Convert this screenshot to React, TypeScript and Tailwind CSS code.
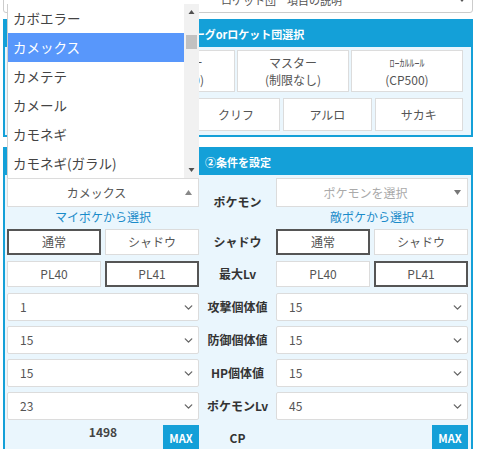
import React from 'react';
import { ChevronDown } from 'lucide-react';

const pokemonList = ['カボエラー', 'カメックス', 'カメテテ', 'カメール', 'カモネギ', 'カモネギ(ガラル)'];

function PanelHeader({ title }: { title: string }) {
  return (
    <div className="flex h-[26px] items-center justify-center bg-[#14a0d8] text-[11px] font-bold text-white">
      {title}
    </div>
  );
}

function Toggle({ label, active }: { label: string; active?: boolean }) {
  return (
    <div
      className={
        active
          ? 'flex h-full items-center justify-center border-2 border-[#555] bg-white text-[12px] text-[#555]'
          : 'flex h-full items-center justify-center border border-[#dcdcdc] bg-white text-[12px] text-[#555]'
      }
    >
      {label}
    </div>
  );
}

function ValueSelect({ value }: { value: string }) {
  return (
    <div className="flex h-full items-center justify-between rounded-[2px] border border-[#dcdcdc] bg-white pl-[12px] pr-[3px] text-[12px] text-[#555]">
      <span>{value}</span>
      <ChevronDown size={13} strokeWidth={2.5} className="text-[#666]" />
    </div>
  );
}

function Row({ label, h, mt, children }: { label: string; h: string; mt: string; children: React.ReactNode }) {
  return (
    <div className={`grid grid-cols-[192px_75px_192px] gap-x-[1px] ${h} ${mt}`}>
      {React.Children.toArray(children)[0]}
      <div className="flex items-center justify-center text-[12px] font-bold text-[#333]">{label}</div>
      {React.Children.toArray(children)[1]}
    </div>
  );
}

function Dropdown() {
  return (
    <div className="absolute left-[7px] top-[4px] flex h-[174px] w-[192px] border-l border-[#cfcfcf] bg-white">
      <div className="flex-1">
        {pokemonList.map((name, i) => (
          <div
            key={name}
            className={
              i === 1
                ? 'flex h-[29px] items-center bg-[#5897fb] pl-[5px] text-[13.5px] text-white'
                : 'flex h-[29px] items-center pl-[5px] text-[13.5px] text-[#444]'
            }
          >
            {name}
          </div>
        ))}
      </div>
      <div className="flex w-[15px] flex-col items-center bg-[#f1f1f1]">
        <svg width="7" height="17" viewBox="0 0 7 17">
          <polygon points="0.5,10 6.5,10 3.5,6" fill="#505050" />
        </svg>
        <div className="mt-[14px] h-[14px] w-[11px] bg-[#c1c1c1]" />
        <div className="flex-1" />
        <svg width="7" height="17" viewBox="0 0 7 17">
          <polygon points="0.5,7 6.5,7 3.5,11" fill="#505050" />
        </svg>
      </div>
    </div>
  );
}

export default function App() {
  return (
    <div className="relative h-[449px] w-[480px] overflow-hidden bg-white pl-[3px] pr-[7px] font-['Noto_Sans_CJK_JP',sans-serif]">
      {/* top select, scrolled half out of view */}
      <div className="-mt-[13px] flex h-[26px] items-center justify-between rounded-[3px] border border-[#ccc] bg-white pl-[217px] pr-[6px] text-[11px] text-[#555]">
        <span>ロケット団　項目の説明</span>
        <svg width="8" height="6" viewBox="0 0 8 6">
          <polygon points="0,0 8,0 4,5" fill="#555" />
        </svg>
      </div>

      {/* panel 1 */}
      <div className="mt-[6px] border-2 border-[#14a0d8]">
        <PanelHeader title="①リーグorロケット団選択" />
        <div className="bg-[#eaf6fd] pb-[4px] pl-[4px] pr-[8px] pt-[3px]">
          <div className="grid h-[42px] grid-cols-4 gap-x-[2px] text-[12px] leading-[17px] text-[#555]">
            <div className="flex flex-col items-center justify-center border border-[#dcdcdc] bg-white">
              <span>スーパー</span>
              <span>(CP1500)</span>
            </div>
            <div className="flex flex-col items-center justify-center border border-[#dcdcdc] bg-white">
              <span>ハイパー</span>
              <span>(CP2500)</span>
            </div>
            <div className="flex flex-col items-center justify-center border border-[#dcdcdc] bg-white">
              <span>マスター</span>
              <span>(制限なし)</span>
            </div>
            <div className="flex flex-col items-center justify-center border border-[#dcdcdc] bg-white">
              <span className="text-[10px]">ﾛｰｶﾙﾙｰﾙ</span>
              <span>(CP500)</span>
            </div>
          </div>
          <div className="mt-[6px] grid h-[33px] grid-cols-5 gap-x-[3px]">
            <Toggle label="したっぱ" />
            <Toggle label="シエラ" />
            <Toggle label="クリフ" />
            <Toggle label="アルロ" />
            <Toggle label="サカキ" />
          </div>
        </div>
      </div>

      {/* panel 2 */}
      <div className="mt-[10px] border-x-2 border-t-2 border-[#14a0d8]">
        <PanelHeader title="②条件を設定" />
        <div className="h-[300px] bg-[#eaf6fd] pl-[2px] pr-[3px] pt-[3px]">
          <Row label="ポケモン" h="h-[48px]" mt="mt-0">
            <div className="flex flex-col items-center">
              <div className="flex h-[29px] w-full items-center justify-center border border-[#dcdcdc] bg-white text-[12px] text-[#555]">
                <span className="flex-1 text-center">カメックス</span>
                <svg width="7" height="5" viewBox="0 0 7 5" className="mr-[6px]">
                  <polygon points="0,5 7,5 3.5,0" fill="#888" />
                </svg>
              </div>
              <span className="mt-[1px] text-[12px] text-[#1a8bc9]">マイポケから選択</span>
            </div>
            <div className="flex flex-col items-center">
              <div className="flex h-[29px] w-full items-center justify-center border border-[#dcdcdc] bg-white text-[12px] text-[#aaa]">
                <span className="flex-1 text-center">ポケモンを選択</span>
                <svg width="7" height="5" viewBox="0 0 7 5" className="mr-[6px]">
                  <polygon points="0,0 7,0 3.5,5" fill="#777" />
                </svg>
              </div>
              <span className="mt-[1px] text-[12px] text-[#1a8bc9]">敵ポケから選択</span>
            </div>
          </Row>

          <Row label="シャドウ" h="h-[26px]" mt="mt-[3px]">
            <div className="grid grid-cols-2 gap-x-[4px]">
              <Toggle label="通常" active />
              <Toggle label="シャドウ" />
            </div>
            <div className="grid grid-cols-2 gap-x-[4px]">
              <Toggle label="通常" active />
              <Toggle label="シャドウ" />
            </div>
          </Row>

          <Row label="最大Lv" h="h-[26px]" mt="mt-[6px]">
            <div className="grid grid-cols-2 gap-x-[4px]">
              <Toggle label="PL40" />
              <Toggle label="PL41" active />
            </div>
            <div className="grid grid-cols-2 gap-x-[4px]">
              <Toggle label="PL40" />
              <Toggle label="PL41" active />
            </div>
          </Row>

          <Row label="攻撃個体値" h="h-[28px]" mt="mt-[6px]">
            <ValueSelect value="1" />
            <ValueSelect value="15" />
          </Row>
          <Row label="防御個体値" h="h-[28px]" mt="mt-[5px]">
            <ValueSelect value="15" />
            <ValueSelect value="15" />
          </Row>
          <Row label="HP個体値" h="h-[28px]" mt="mt-[5px]">
            <ValueSelect value="15" />
            <ValueSelect value="15" />
          </Row>
          <Row label="ポケモンLv" h="h-[28px]" mt="mt-[5px]">
            <ValueSelect value="23" />
            <ValueSelect value="45" />
          </Row>

          <div className="mt-[5px] grid h-[26px] grid-cols-[192px_75px_192px] gap-x-[1px]">
            <div className="grid grid-cols-[36px_1fr_36px]">
              <div />
              <div className="text-center text-[12px] font-bold leading-[14px] text-[#444]">1498</div>
              <div className="flex items-center justify-center bg-[#14a0d8] text-[11px] font-bold text-white">MAX</div>
            </div>
            <div className="flex items-center justify-center text-[12px] font-bold text-[#333]">CP</div>
            <div className="grid grid-cols-[1fr_36px]">
              <div />
              <div className="flex items-center justify-center bg-[#14a0d8] text-[11px] font-bold text-white">MAX</div>
            </div>
          </div>
        </div>
      </div>

      <Dropdown />
    </div>
  );
}
